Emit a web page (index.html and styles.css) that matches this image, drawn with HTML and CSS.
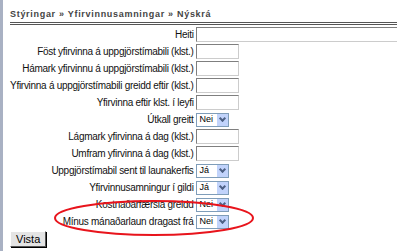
FILE: index.html
```html
<!DOCTYPE html>
<html lang="is">
<head>
  <meta charset="UTF-8" />
  <title>Nýskrá</title>
  <link rel="stylesheet" href="styles.css">
</head>
<body>
  <div class="sidebar"></div>
  <div class="content">
    <h1 class="crumbs">Stýringar » Yfirvinnusamningar » Nýskrá</h1>

    <form class="form">
      <table class="fields">
        <tr><td class="lbl">Heiti</td><td><input type="text" class="wide"></td></tr>
        <tr><td class="lbl">Föst yfirvinna á uppgjörstímabili (klst.)</td><td><input type="text" class="num"></td></tr>
        <tr><td class="lbl">Hámark yfirvinnu á uppgjörstímabili (klst.)</td><td><input type="text" class="num"></td></tr>
        <tr><td class="lbl">Yfirvinna á uppgjörstímabili greidd eftir (klst.)</td><td><input type="text" class="num"></td></tr>
        <tr><td class="lbl">Yfirvinna eftir klst. í leyfi</td><td><input type="text" class="num"></td></tr>
        <tr><td class="lbl">Útkall greitt</td><td><span class="sel">Nei<i class="arrow"></i></span></td></tr>
        <tr><td class="lbl">Lágmark yfirvinna á dag (klst.)</td><td><input type="text" class="num"></td></tr>
        <tr><td class="lbl">Umfram yfirvinna á dag (klst.)</td><td><input type="text" class="num"></td></tr>
        <tr><td class="lbl">Uppgjörstímabil sent til launakerfis</td><td><span class="sel">Já<i class="arrow"></i></span></td></tr>
        <tr><td class="lbl">Yfirvinnusamningur í gildi</td><td><span class="sel">Já<i class="arrow"></i></span></td></tr>
        <tr><td class="lbl">Kostnaðarfærsla greidd</td><td><span class="sel">Nei<i class="arrow"></i></span></td></tr>
        <tr><td class="lbl">Mínus mánaðarlaun dragast frá</td><td><span class="sel">Nei<i class="arrow"></i></span></td></tr>
      </table>
      <button type="button" class="save">Vista</button>
    </form>

    <svg class="mark" width="202" height="38" viewBox="0 0 202 38">
      <ellipse cx="101" cy="19" rx="99" ry="17" fill="none" stroke="#e8141c" stroke-width="2" />
    </svg>
  </div>
</body>
</html>
```

FILE: styles.css
```css
body {
  margin: 0;
  font-family: "Liberation Sans", Arial, sans-serif;
  font-size: 11px;
  color: #000;
  background: #fff;
  display: flex;
  height: 251px;
  overflow: hidden;
}

.sidebar {
  width: 3px;
  background: #a9b1c3;
  flex-shrink: 0;
}

.content {
  position: relative;
  flex: 1;
  min-width: 0;
  padding-left: 7px;
  overflow: hidden;
}

.crumbs {
  margin: 8px 0 0 0;
  padding-bottom: 2px;
  font-size: 9px;
  line-height: 12px;
  font-weight: bold;
  letter-spacing: 0.7px;
  color: #444;
  border-bottom: 3px double #555;
}

.fields {
  border-collapse: collapse;
  margin-top: 1px;
}

.fields td {
  padding: 1px 0;
  height: 15px;
  line-height: 15px;
}

.lbl {
  text-align: right;
  padding-right: 2px !important;
  white-space: nowrap;
  font-size: 10px;
  letter-spacing: -0.28px;
  color: #111;
}

input {
  box-sizing: border-box;
  height: 15px;
  border: 1px solid #7f7f7f;
  border-right-color: #ccc;
  border-bottom-color: #ccc;
  margin: 0;
  padding: 0 2px;
  display: block;
}

.wide {
  width: 204px;
}

.num {
  width: 43px;
}

.sel {
  box-sizing: border-box;
  display: flex;
  align-items: center;
  width: 33px;
  height: 14px;
  border: 1px solid #7f9db9;
  padding-left: 3px;
  font-size: 9px;
  position: relative;
}

.arrow {
  position: absolute;
  right: 0;
  top: 0;
  bottom: 0;
  width: 11px;
  background: #c1d3fb;
}

.arrow::after {
  content: "";
  position: absolute;
  left: 3px;
  top: 2px;
  width: 3px;
  height: 3px;
  border-right: 2px solid #4d6185;
  border-bottom: 2px solid #4d6185;
  transform: rotate(45deg);
}

.save {
  display: block;
  margin-top: 1px;
  font-family: inherit;
  font-size: 11px;
  height: 16px;
  line-height: 14px;
  padding: 0 5px;
  background: #e4e4e4;
  border: 1px solid #555;
  border-top-color: #fff;
  border-left-color: #fff;
  box-shadow: 1px 1px 0 #000;
}

.mark {
  position: absolute;
  left: 50px;
  top: 199px;
}
```
